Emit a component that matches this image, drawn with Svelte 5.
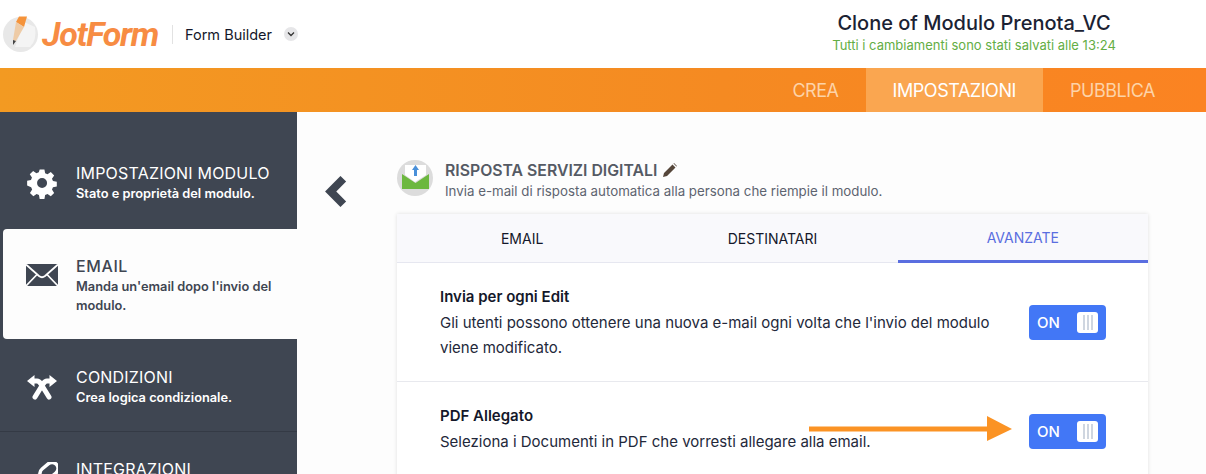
<script>
  const tabs = [
    { label: 'CREA', active: false },
    { label: 'IMPOSTAZIONI', active: true },
    { label: 'PUBBLICA', active: false }
  ];
  const formTabs = ['EMAIL', 'DESTINATARI', 'AVANZATE'];
  const options = [
    {
      title: 'Invia per ogni Edit',
      text: "Gli utenti possono ottenere una nuova e-mail ogni volta che l'invio del modulo viene modificato."
    },
    {
      title: 'PDF Allegato',
      text: 'Seleziona i Documenti in PDF che vorresti allegare alla email.'
    }
  ];
</script>

<div class="page">
  <header class="top">
    <div class="brand">
      <svg class="logo-mark" width="36" height="37" viewBox="0 0 36 37">
        <circle cx="17.500" cy="18.500" r="17.500" fill="#e8e8e8" />
        <path d="M21 6 L32 11 Q34 24 27 31 L12 31 Z" fill="#f4f4f4" />
        <path d="M13 6 L16 .5 L24 .5 L21 11 Z" fill="#f5933a" />
        <path d="M13 6 L21 11 L13 25 L10 24 Z" fill="#eecba6" />
        <path d="M10 24 L13 25 L10 29 Z" fill="#444" />
      </svg>
      <span class="logo-text">JotForm</span>
      <span class="divider"></span>
      <span class="builder">Form Builder</span>
      <span class="caret">
        <svg width="8" height="6" viewBox="0 0 8 6"><path d="M1 1.500 L4 4.500 L7 1.500" fill="none" stroke="#333" stroke-width="1.300" /></svg>
      </span>
    </div>
    <div class="title">
      <div class="form-name">Clone of Modulo Prenota_VC</div>
      <div class="saved">Tutti i cambiamenti sono stati salvati alle 13:24</div>
    </div>
  </header>

  <nav class="bar">
    {#each tabs as tab}
      <span class="bar-tab" class:active={tab.active}>{tab.label}</span>
    {/each}
  </nav>

  <div class="body">
    <aside class="side">
      <div class="item first">
        <svg class="ico" width="32" height="32" viewBox="0 0 32 32">
          <path fill="#fff" fill-rule="evenodd" d="M13.400 1h5.200l.8 4.200 2.600 1.100 3.600-2.400 3.700 3.700-2.400 3.600 1.100 2.600 4.200.8v5.200l-4.200.8-1.100 2.600 2.400 3.600-3.700 3.700-3.600-2.400-2.600 1.100-.8 4.200h-5.200l-.8-4.200-2.600-1.100-3.600 2.400-3.700-3.700 2.400-3.600-1.100-2.600L-.4 18.600v-5.200l4.200-.8 1.100-2.600-2.400-3.600 3.700-3.700 3.600 2.400 2.600-1.100z M16 10.500a5.500 5.500 0 1 0 0 11a5.500 5.500 0 1 0 0-11z" transform="translate(1.500 1.500) scale(.91)" />
        </svg>
        <div class="item-text">
          <div class="item-title">IMPOSTAZIONI MODULO</div>
          <div class="item-sub">Stato e proprietà del modulo.</div>
        </div>
      </div>
      <div class="item current">
        <svg class="ico" width="32" height="24" viewBox="0 0 32 24">
          <path fill="#3f4652" d="M0 1h32v22H0z" />
          <path fill="none" stroke="#fff" stroke-width="1.700" d="M0 1.500 L13 13 Q16 15.500 19 13 L32 1.500 M0 23 L11 11.500 M32 23 L21 11.500" />
        </svg>
        <div class="item-text">
          <div class="item-title">EMAIL</div>
          <div class="item-sub">Manda un'email dopo l'invio del modulo.</div>
        </div>
      </div>
      <div class="item cond">
        <svg class="ico" width="32" height="26" viewBox="0 0 32 26">
          <g fill="none" stroke="#fff" stroke-width="5" stroke-linecap="round">
            <path d="M8 7 H11 Q13 7 15 10 L23 23" />
            <path d="M24 7 H21 Q19 7 17 10 L9 23" />
          </g>
          <path fill="#fff" d="M1 7 L8.500 1 V13 Z M31 7 L23.500 1 V13 Z" />
        </svg>
        <div class="item-text">
          <div class="item-title">CONDIZIONI</div>
          <div class="item-sub">Crea logica condizionale.</div>
        </div>
      </div>
      <div class="item last">
        <svg class="ico" width="32" height="32" viewBox="0 0 32 32">
          <rect x="13" y="3" width="20" height="12" rx="6" transform="rotate(-40 23 9)" fill="none" stroke="#fff" stroke-width="3.500" />
          <rect x="0" y="16" width="20" height="12" rx="6" transform="rotate(-40 10 22)" fill="none" stroke="#fff" stroke-width="3.500" />
        </svg>
        <div class="item-text">
          <div class="item-title">INTEGRAZIONI</div>
        </div>
      </div>
    </aside>

    <main class="main">
      <svg class="back" width="22" height="31" viewBox="0 0 22 31">
        <path d="M18.300 2.800 L5.700 15.500 L18.300 28.200" fill="none" stroke="#3f4652" stroke-width="8" />
      </svg>

      <div class="content">
        <div class="head">
          <svg class="mail" width="36" height="36" viewBox="0 0 36 36">
            <circle cx="18" cy="18" r="18" fill="#dcdcdc" />
            <path d="M8 15 L8 5 H29 V15 L18 22 Z" fill="#fff" />
            <path d="M18.500 5 L15 10 H17 V16 H20 V10 H22 Z" fill="#4a90d9" />
            <path d="M5 14 L18.500 23 L32 14 V29 H5 Z" fill="#6cb83f" />
          </svg>
          <div>
            <div class="head-title">
              RISPOSTA SERVIZI DIGITALI
              <svg width="14" height="14" viewBox="0 0 14 14"><path fill="#55463a" d="M0 14 L1 10 L9.500 1.500 L12.500 4.500 L4 13 Z M10.500 .5 L11 0 L14 3 L13.500 3.500 Z" /></svg>
            </div>
            <div class="head-sub">Invia e-mail di risposta automatica alla persona che riempie il modulo.</div>
          </div>
        </div>

        <div class="card">
          <div class="tabs">
            {#each formTabs as t, i}
              <div class="tab" class:on={i === 2}>{t}</div>
            {/each}
          </div>
          {#each options as opt}
            <div class="row">
              <div class="row-text">
                <div class="row-title">{opt.title}</div>
                <div class="row-desc">{opt.text}</div>
              </div>
              <div class="toggle">
                <span>ON</span>
                <span class="knob"><i></i><i></i><i></i></span>
              </div>
            </div>
          {/each}
        </div>
      </div>

      <svg class="arrow" width="204" height="26" viewBox="0 0 204 26">
        <path d="M0 10.500 H178 V0 L203 13 L178 25 V15.500 H0 Z" fill="#fb9324" />
      </svg>
    </main>
  </div>
</div>

<style>
  :global(body) {
    margin: 0;
    background: #fff;
    font-family: Inter, "Liberation Sans", sans-serif;
  }

  .page {
    width: 1206px;
    height: 474px;
    overflow: hidden;
    display: flex;
    flex-direction: column;
  }

  .top {
    height: 68px;
    display: flex;
    justify-content: space-between;
    background: #fff;
  }

  .brand {
    display: flex;
    align-items: center;
    padding-left: 3px;
  }

  .logo-text {
    margin-left: 3px;
    width: 130px;
    font-family: Roboto, sans-serif;
    font-size: 34px;
    font-weight: 700;
    font-style: italic;
    letter-spacing: -1.300px;
    color: #f78c43;
  }

  .divider {
    width: 1px;
    height: 19px;
    background: #e2e2e2;
  }

  .builder {
    margin-left: 12px;
    font-size: 14.500px;
    color: #14182a;
  }

  .caret {
    margin-left: 12px;
    width: 14px;
    height: 14px;
    border-radius: 50%;
    background: #e6e6e8;
    display: flex;
    align-items: center;
    justify-content: center;
  }

  .title {
    width: 300px;
    margin-right: 82px;
    text-align: center;
    padding-top: 11px;
  }

  .form-name {
    font-size: 20px;
    font-weight: 500;
    line-height: 24px;
    color: #1b2233;
  }

  .saved {
    margin-top: 3px;
    font-size: 13px;
    line-height: 15px;
    color: #63ae44;
  }

  .bar {
    height: 44px;
    display: flex;
    justify-content: flex-end;
    padding-right: 24px;
    background: linear-gradient(90deg, #f39a22, #f58a22 60%, #fb8322);
  }

  .bar-tab {
    display: flex;
    align-items: center;
    padding: 0 27px;
    font-size: 18px;
    letter-spacing: -0.450px;
    color: #fdd3a8;
  }

  .bar-tab.active {
    background: #faa650;
    color: #fff;
  }

  .body {
    flex: 1;
    display: flex;
    min-height: 0;
  }

  .side {
    width: 297px;
    flex: none;
    background: #3f4652;
    color: #fff;
  }

  .item {
    display: flex;
    align-items: center;
    box-sizing: border-box;
    padding-left: 26px;
  }

  .ico {
    flex: none;
  }

  .item-text {
    margin-left: 18px;
  }

  .item-title {
    font-size: 16px;
    line-height: 20px;
    letter-spacing: 0.200px;
  }

  .item-sub {
    margin-top: 1px;
    font-size: 12.800px;
    line-height: 19px;
    font-weight: 600;
  }

  .first {
    height: 117px;
    padding-top: 25px;
  }

  .current {
    height: 110px;
    margin-left: 3px;
    padding-left: 23px;
    background: #fdfdfd;
    color: #3f4652;
    border-radius: 4px 0 0 4px;
    align-items: flex-start;
    padding-top: 27px;
  }

  .current .ico {
    margin-top: 7px;
  }

  .current .item-title {
    font-weight: 500;
    letter-spacing: 0.600px;
  }

  .current .item-text {
    width: 210px;
  }

  .cond {
    height: 93px;
    padding-top: 4px;
    border-bottom: 1px solid #343a45;
  }

  .last {
    padding-top: 27px;
    align-items: flex-start;
  }

  .last .ico {
    margin-top: 3px;
  }

  .main {
    position: relative;
    flex: 1;
    display: flex;
    background: #fdfdfd;
    min-width: 0;
  }

  .back {
    flex: none;
    margin: 64px 0 0 28px;
  }

  .content {
    width: 751px;
    margin-left: 50px;
    padding-top: 48px;
  }

  .head {
    display: flex;
    gap: 12px;
    height: 54px;
  }

  .head-title {
    display: flex;
    align-items: center;
    gap: 6px;
    height: 20px;
    font-size: 15.800px;
    font-weight: 600;
    color: #555a64;
  }

  .head-sub {
    margin-top: 2px;
    font-size: 13.300px;
    line-height: 18px;
    color: #5d6470;
  }

  .card {
    background: #fff;
    box-shadow: 0 0 4px rgba(0, 0, 0, 0.12);
  }

  .tabs {
    display: grid;
    grid-template-columns: repeat(3, 1fr);
    height: 48px;
    background: #f9f9fc;
    border-bottom: 1px solid #e6e7f0;
  }

  .tab {
    display: flex;
    align-items: center;
    justify-content: center;
    font-size: 14px;
    color: #14182a;
  }

  .tab.on {
    color: #5a6ee0;
    margin-bottom: -1px;
    border-bottom: 3px solid #5a6ee0;
  }

  .row {
    display: flex;
    justify-content: space-between;
    box-sizing: border-box;
    min-height: 99px;
    padding: 24px 42px 21px 43px;
    border-bottom: 1px solid #e8e9ee;
  }

  .row-text {
    width: 570px;
  }

  .row-title {
    font-size: 15px;
    line-height: 20px;
    font-weight: 600;
    color: #14182a;
  }

  .row-desc {
    margin-top: 3px;
    font-size: 15px;
    line-height: 25px;
    color: #23283a;
  }

  .toggle {
    align-self: center;
    display: flex;
    align-items: center;
    justify-content: space-between;
    box-sizing: border-box;
    width: 77px;
    height: 35px;
    margin-bottom: 2px;
    padding: 0 8px;
    background: #4277f6;
    border-radius: 4px;
    color: #fff;
    font-size: 15px;
    font-weight: 500;
  }

  .knob {
    display: flex;
    align-items: center;
    justify-content: center;
    gap: 2px;
    width: 21px;
    height: 21px;
    background: #fff;
    border-radius: 3px;
  }

  .knob i {
    width: 2px;
    height: 15px;
    background: #cfd6e0;
  }

  .arrow {
    position: absolute;
    left: 512px;
    top: 304px;
  }
</style>
